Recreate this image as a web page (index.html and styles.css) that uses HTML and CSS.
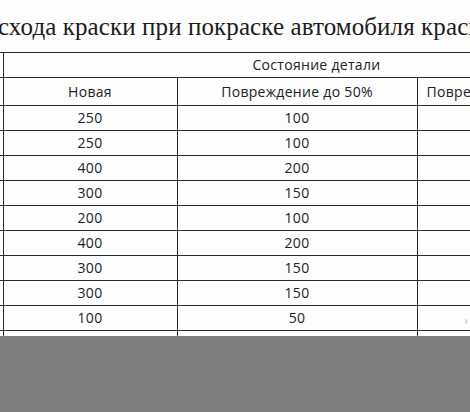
FILE: index.html
```html
<!DOCTYPE html>
<html lang="ru">
<head>
<meta charset="utf-8">
<link rel="stylesheet" href="styles.css">
</head>
<body>
<div class="page">
  <div class="title">сходa краски при покраске автомобиля краск</div>
  <div class="sheet">
    <table class="grid">
      <colgroup>
        <col class="c0"><col class="c1"><col class="c2"><col class="c3">
      </colgroup>
      <tr class="h1">
        <td></td>
        <td class="merged" colspan="3"><span class="state">Состояние детали</span></td>
      </tr>
      <tr class="h2">
        <td></td>
        <td>Новая</td>
        <td>Повреждение до 50%</td>
        <td class="left">Повреждение более 50%</td>
      </tr>
      <tr><td></td><td>250</td><td>100</td><td></td></tr>
      <tr><td></td><td>250</td><td>100</td><td></td></tr>
      <tr><td></td><td>400</td><td>200</td><td></td></tr>
      <tr><td></td><td>300</td><td>150</td><td></td></tr>
      <tr><td></td><td>200</td><td>100</td><td></td></tr>
      <tr><td></td><td>400</td><td>200</td><td></td></tr>
      <tr><td></td><td>300</td><td>150</td><td></td></tr>
      <tr><td></td><td>300</td><td>150</td><td></td></tr>
      <tr><td></td><td>100</td><td>50</td><td></td></tr>
      <tr><td></td><td>250</td><td>100</td><td></td></tr>
    </table>
    <span class="chev">›</span>
  </div>
  <div class="shade"></div>
</div>
</body>
</html>
```
FILE: styles.css
```css
html, body {
  margin: 0;
  padding: 0;
  background: #fdfdfd;
}
.page {
  width: 470px;
  height: 412px;
  overflow: hidden;
  display: flex;
  flex-direction: column;
}
.title {
  height: 52px;
  box-sizing: border-box;
  padding-top: 14px;
  font-family: "Liberation Serif", serif;
  font-size: 25px;
  line-height: 26px;
  color: #1c1c1c;
  white-space: nowrap;
  text-indent: -2px;
  letter-spacing: 0.1px;
}
.sheet {
  position: relative;
  height: 284px;
  overflow: hidden;
  flex: none;
}
.grid {
  border-collapse: collapse;
  table-layout: fixed;
  width: 660px;
  font-family: "Open Sans", sans-serif;
  font-size: 14px;
  letter-spacing: 0.3px;
  color: #222;
}
.c0 { width: 3px; }
.c1 { width: 174px; }
.c2 { width: 240px; }
.c3 { width: 243px; }
.grid td {
  border: 1px solid #2a2a2a;
  height: 24px;
  padding: 0;
  text-align: center;
  vertical-align: middle;
  white-space: nowrap;
  overflow: hidden;
  line-height: 16px;
}
.grid td:first-child {
  border-left: none;
}
.grid .h1 td {
  height: 24px;
}
.grid .h2 td {
  height: 27px;
}
.grid .merged {
  text-align: left;
  padding-left: 249px;
}
.grid .left {
  text-align: left;
  padding-left: 9px;
}
.chev {
  position: absolute;
  right: 2px;
  top: 260px;
  font-family: "Open Sans", sans-serif;
  font-size: 12px;
  color: #b8b8b8;
}
.shade {
  flex: 1;
  background: #807e7f;
}
```
